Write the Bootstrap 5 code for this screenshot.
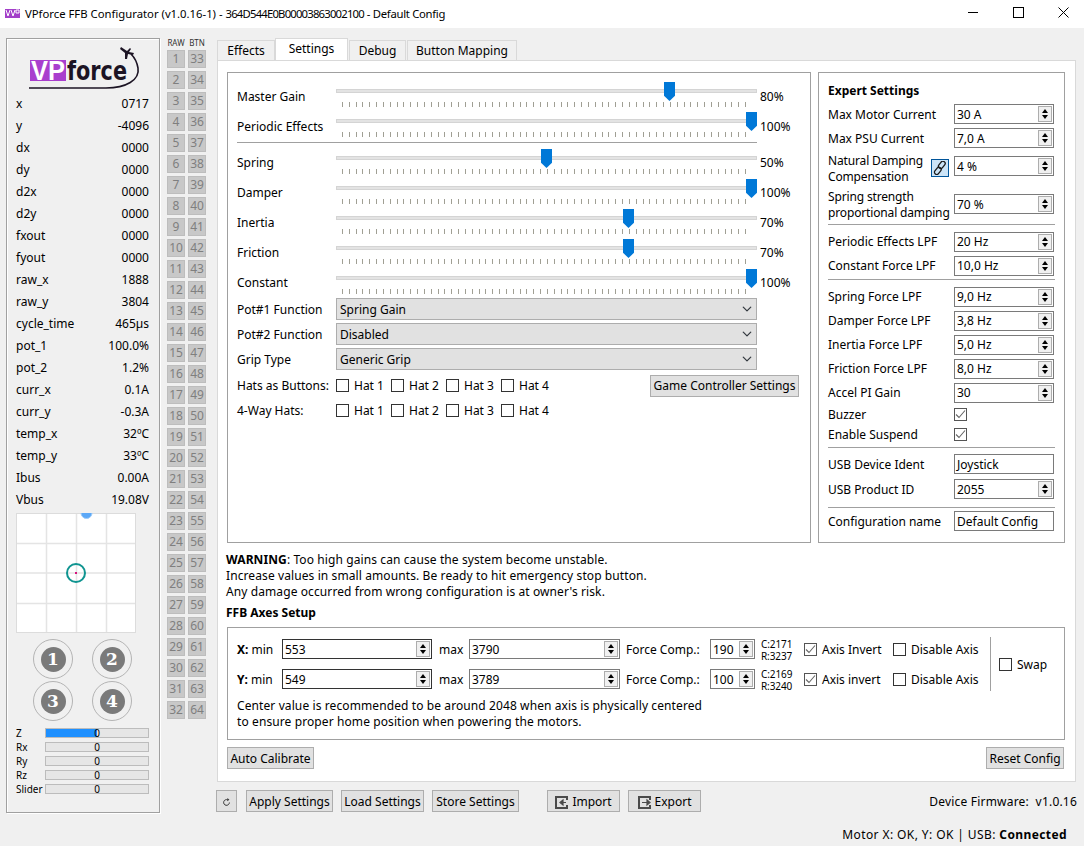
<!DOCTYPE html>
<html lang="en">
<head>
<meta charset="utf-8">
<title>VPforce FFB Configurator</title>
<link href="https://cdn.jsdelivr.net/npm/bootstrap@5.3.0/dist/css/bootstrap.min.css" rel="stylesheet">
<style>
html,body{width:1084px;height:846px;overflow:hidden}
body{background:#f0f0f0;color:#000;font:12px/16px "Noto Sans","Liberation Sans",sans-serif}
.titlebar{height:28px;background:#fff;padding-left:5px}
.titlebar .ttl{margin-left:5px;font-size:11.3px}
.hexid{letter-spacing:-.8px}
.ttlend{letter-spacing:-.3px}
.winrow{margin-right:-2px;align-self:flex-start}
.winctl{width:45px;height:25px}
.appbody{height:796px;padding-left:6px}
.sidepanel{width:154px;height:775px;margin-top:10px;background:#f0f0f0;border:1px solid #a0a0a0;box-shadow:inset 1px 1px #fff,1px 1px #fff;padding:0 10px 0 9px}
.logoarea{height:53px;padding-left:12px;padding-top:5px}
.telrow{height:22px;line-height:24px}
.joy{display:block;width:120px;height:120px;margin-top:3px}
.roundgrid{display:grid;grid-template-columns:40px 40px;gap:2px 19px;margin:6px 0 0 17px}
.roundbtn{width:40px;height:40px;border:1px solid #b4b4b4;border-radius:50%}
.roundbtn span{display:block;width:25px;height:25px;border-radius:50%;background:#7a7a7a;color:#fff;font:700 17px/25px "DejaVu Serif",serif;text-align:center}
.barlist{margin-top:5px}
.barrow{height:14px;font-size:10px;line-height:14px}
.barname{width:29px}
.axisbar{width:104px;height:10px;border:1px solid #bcbcbc;background:#e6e6e6;position:relative;text-align:center;font-size:10px;line-height:8px}
.axisbar i{position:absolute;left:0;top:0;height:100%;background:#1e90ff}
.axisbar b{position:relative;font-weight:400}
.btncol{width:39px;margin:0 0 0 7px;padding-top:10px}
.btncol .hdr{height:12px;font-size:8px;line-height:9px;color:#333;gap:3px;margin-top:0}
.btncol .hdr span{width:18px;text-align:center}
.btngrid{display:grid;grid-template-columns:18px 18px;grid-auto-rows:18px;gap:3px;margin-top:0}
.rawcell{background:#c8c8c8;border:1px solid #bdbdbd;color:#7f7f7f;font-size:12px;line-height:16px;text-align:center}
.maincol{width:859px;margin-left:11px;padding-top:10px}
.tabset{height:22px;gap:0;border:0;flex-wrap:nowrap}
.tabset .nav-link{height:20px;margin:2px 0 0 0;padding:0;text-align:center;line-height:20px;color:#000;font-size:12px;background:#f0f0f0;border:1px solid #d9d9d9;border-bottom:0;border-radius:0;margin-right:1px}
.tabset .nav-link.active{height:22px;margin:0 1px 0 0;background:#fff;border-color:#d9d9d9;color:#000;line-height:20px}
.tab-a{width:58px}.tab-b{width:73px}.tab-c{width:57px}.tab-d{width:110px}
.tabset .tab-a{margin-right:0!important}
.pane{height:722px;background:#fff;border:1px solid #d9d9d9;padding:11px 10px 0 9px}
.topboxes{gap:7px}
.framebox{height:471px;border:1px solid #a0a0a0}
.fxbox{width:584px;padding:9px 11px 0 9px}
.xpbox{width:247px;padding:10px 9px 0 9px}
.fxrow{height:30px}
.fxrow.up>span{margin-top:-2px}
.fxname{width:99px;flex:none}
.track{width:421px;height:30px;flex:none;position:relative;margin-top:0!important}
.track::before{content:"";position:absolute;left:0;right:0;top:7px;height:4px;background:#e3e3e3;border:1px solid #d4d4d4}
.track::after{content:"";position:absolute;left:6px;right:5px;top:20px;height:5px;background:repeating-linear-gradient(90deg,#a09f94 0 1px,transparent 1px 6.833px)}
.thumb{position:absolute;top:0;width:11px;height:19px;margin-left:-6px;background:#0078d7;clip-path:polygon(0 0,100% 0,100% 73%,50% 100%,0 73%);z-index:1}
.fxval{margin-left:3px;white-space:nowrap}
.fxsep{height:1px;background:#a0a0a0;margin-bottom:6px;width:520px}
.fxsel{width:421px;height:22px;flex:none;padding:2px 20px 0 3px;font-size:12px;line-height:18px;color:#000;background-color:#e1e1e1;border:1px solid #adadad;border-radius:0;background-position:right 3px center;background-size:12px 10px}
.selrow{height:22px;margin-bottom:3px}
.selrow .fxname{padding-top:2px}
.selrow.first{margin-top:-1px}
.hatrow{height:25px}
.hatopt{width:55px;gap:5px;margin:0}
.chk{width:13px;height:13px;margin:0;flex:none;border:1px solid #333;border-radius:0!important;background-color:#fff;box-shadow:none!important}
.chk:checked,.chk:checked[type=checkbox]{background-color:#fff;border-color:#555;background-image:url("data:image/svg+xml,%3Csvg xmlns='http://www.w3.org/2000/svg' viewBox='0 0 13 13'%3E%3Cpath d='M2 6.5l3 3 6-7' fill='none' stroke='%23666' stroke-width='1.1'/%3E%3C/svg%3E");background-size:13px 13px}
.appbtn{--bs-btn-padding-x:2px;--bs-btn-padding-y:0;--bs-btn-font-size:12px;--bs-btn-border-radius:0;--bs-btn-bg:#e1e1e1;--bs-btn-border-color:#adadad;--bs-btn-color:#000;--bs-btn-line-height:18px;height:22px;padding-top:2px;white-space:nowrap;display:inline-flex;align-items:center;justify-content:center}
.appbtn.gcs{width:149px;padding-top:0}
.xptitle{height:16px;font-weight:700;margin-bottom:3px}
.xprow{height:24px}
.xprow.tall{height:32px;line-height:16px}
.xprow.lift .spin{line-height:18px}
.xplabel{flex:none;width:126px;white-space:nowrap}
.xplabel.dn1{padding-top:2px}
.xplabel.dn3{padding-top:6px}
.xplabel.tight{letter-spacing:-.15px}
.xpcheck .xplabel{padding-top:2px}
.xpnarrow{width:103px}
.linkbtn{width:18px;height:18px;margin:4px 5px 0 0;background:#cce4f7;border:1px solid #005499;flex:none}
.spin{width:100px;height:20px;border:1px solid #7a7a7a;background:#fff;padding-left:2px;line-height:20px;flex:none;position:relative}
.arrows{position:absolute;right:1px;top:1px;bottom:1px;width:14px;background:#f0f0f0;border:1px solid #adadad}
.arrows::before,.arrows::after{content:"";position:absolute;left:3px;border:3px solid transparent}
.arrows::before{top:-1px;border-bottom:4px solid #000}
.arrows::after{bottom:-1px;border-top:4px solid #000}
.m-s6{margin-top:6px}.m-s5{margin-top:5px}.m-s1{margin-top:1px}.m-n1{margin-top:-1px}.m-s3{margin-top:3px}
.xphr{height:1px;background:#a0a0a0}
.xpcheck{height:20px}
.warnblock{margin:9px 0 0 -1px;line-height:16px;letter-spacing:.1px}
.axhead{margin:5px 0 0 -1px;font-weight:700;height:16px}
.axbox{height:113px;margin-top:6px;border:1px solid #a0a0a0;padding:11px 0 0 9px;width:838px}
.axleft{width:744px;flex:none}
.axrow{height:20px;margin-bottom:10px;white-space:nowrap}
.axrow:last-child{margin-bottom:0}
.axmin{width:45px;flex:none;padding-top:2px}
.spin.wa{width:150px}.spin.wb{width:151px}.spin.wc{width:45px}
.spin.focus{border-color:#333}
.axmax{margin-left:7px;width:30px;flex:none;padding-top:2px}
.axfc{margin-left:6px;width:84px;flex:none;padding-top:2px}
.axcr{margin-left:6px;width:43px;flex:none;font-size:10px;line-height:12px;padding-top:1px;letter-spacing:-.1px}
.axopt{width:89px;flex:none;gap:5px;margin:0}
.axopt2{flex:none;gap:5px;margin:0}
.axopt span,.axopt2 span,.swapopt span{padding-top:2px}
.axvsep{width:1px;background:#a0a0a0;margin:-2px 0 -2px 9px;height:54px;flex:none}
.swapopt{margin-left:8px;gap:5px}
.axnote{margin-top:8px;line-height:16px;letter-spacing:.1px;padding-top:1px}
.paneact{margin-top:7px;width:837px}
.btn-auto{width:87px}.btn-reset{width:78px}
.footrow{margin:8px 0 0 -1px;height:22px}
.f-ref{width:21px;margin-right:9px}.f-apply{width:87px;margin-right:8px}.f-load{width:83px;margin-right:8px}.f-store{width:87px;margin-right:28px}.f-imp{width:73px;margin-right:8px}.f-exp{width:73px}
.appbtn svg{margin-right:4px}
.fw{margin:0 -1px 0 auto;padding-top:4px;letter-spacing:.2px}
.statusline{height:22px;padding-right:17px;line-height:20px;letter-spacing:.4px}
</style>
</head>
<body>
<div class="titlebar d-flex align-items-center">
  <svg width="15" height="10" viewBox="0 0 15 10"><rect width="15" height="9" y="0" fill="#a33fc9"/><path d="M1 1l2 6 2-6M6 1l2 6 2-6M11 1h3v3h-3z" fill="none" stroke="#fff"/></svg>
  <span class="ttl">VPforce FFB Configurator (v1.0.16-1) - <span class="hexid">364D544E0B00003863002100</span> <span class="ttlend">- Default Config</span></span>
  <div class="ms-auto d-flex winrow">
    <div class="winctl d-flex align-items-center justify-content-center"><svg width="11" height="11"><path d="M0 5.500h10" stroke="#000"/></svg></div>
    <div class="winctl d-flex align-items-center justify-content-center"><svg width="11" height="11"><rect x=".5" y=".5" width="10" height="10" fill="none" stroke="#000"/></svg></div>
    <div class="winctl d-flex align-items-center justify-content-center"><svg width="11" height="11"><path d="M.5.5l10 10M10.500.5l-10 10" stroke="#000"/></svg></div>
  </div>
</div>

<div class="appbody d-flex">
  <aside class="sidepanel">
    <div class="logoarea">
      <svg width="125" height="48" viewBox="0 0 125 48">
        <rect x="2" y="16" width="36" height="21" fill="#a93fce"/>
        <text x="3" y="36" font-family="Liberation Sans" font-weight="700" font-size="27" fill="#fff" textLength="34" lengthAdjust="spacingAndGlyphs">VP</text>
        <text x="39" y="36" font-family="DejaVu Sans" font-weight="700" font-size="26" fill="#1c1424" textLength="60" lengthAdjust="spacingAndGlyphs">force</text>
        <path d="M1 44H78C98 44 112 36 110 24C109 18 106 13 103 10" fill="none" stroke="#1c1424" stroke-width="1.6"/>
        <path d="M93 3l6 4 3-3 1 1-2 3 5 1-1 2-5-1-1 5-2 0 0-6-5-4z" fill="#1c1424"/>
      </svg>
    </div>
    <div class="telrow d-flex justify-content-between"><span>x</span><span>0717</span></div>
    <div class="telrow d-flex justify-content-between"><span>y</span><span>-4096</span></div>
    <div class="telrow d-flex justify-content-between"><span>dx</span><span>0000</span></div>
    <div class="telrow d-flex justify-content-between"><span>dy</span><span>0000</span></div>
    <div class="telrow d-flex justify-content-between"><span>d2x</span><span>0000</span></div>
    <div class="telrow d-flex justify-content-between"><span>d2y</span><span>0000</span></div>
    <div class="telrow d-flex justify-content-between"><span>fxout</span><span>0000</span></div>
    <div class="telrow d-flex justify-content-between"><span>fyout</span><span>0000</span></div>
    <div class="telrow d-flex justify-content-between"><span>raw_x</span><span>1888</span></div>
    <div class="telrow d-flex justify-content-between"><span>raw_y</span><span>3804</span></div>
    <div class="telrow d-flex justify-content-between"><span>cycle_time</span><span>465µs</span></div>
    <div class="telrow d-flex justify-content-between"><span>pot_1</span><span>100.0%</span></div>
    <div class="telrow d-flex justify-content-between"><span>pot_2</span><span>1.2%</span></div>
    <div class="telrow d-flex justify-content-between"><span>curr_x</span><span>0.1A</span></div>
    <div class="telrow d-flex justify-content-between"><span>curr_y</span><span>-0.3A</span></div>
    <div class="telrow d-flex justify-content-between"><span>temp_x</span><span>32ºC</span></div>
    <div class="telrow d-flex justify-content-between"><span>temp_y</span><span>33ºC</span></div>
    <div class="telrow d-flex justify-content-between"><span>Ibus</span><span>0.00A</span></div>
    <div class="telrow d-flex justify-content-between"><span>Vbus</span><span>19.08V</span></div>
    <svg class="joy" viewBox="0 0 120 120">
      <rect width="120" height="120" fill="#fff"/>
      <path d="M30.500 0V120M60.500 0V120M90.500 0V120M0 30.500H120M0 60H120M0 90.500H120" stroke="#e4e4e4" stroke-width="1.500"/>
      <rect x=".5" y=".5" width="119" height="119" fill="none" stroke="#dcdcdc"/>
      <circle cx="70.500" cy="0" r="5.500" fill="#5ba8f7" stroke="#9ccbfa"/>
      <circle cx="60" cy="60" r="9" fill="none" stroke="#0f9490" stroke-width="2"/>
      <rect x="59" y="59" width="2" height="2" fill="#d6127d"/>
    </svg>
    <div class="roundgrid">
      <div class="roundbtn d-flex align-items-center justify-content-center"><span>1</span></div>
      <div class="roundbtn d-flex align-items-center justify-content-center"><span>2</span></div>
      <div class="roundbtn d-flex align-items-center justify-content-center"><span>3</span></div>
      <div class="roundbtn d-flex align-items-center justify-content-center"><span>4</span></div>
    </div>
    <div class="barlist">
      <div class="barrow d-flex align-items-center"><span class="barname">Z</span><div class="axisbar"><i class="w-50"></i><b>0</b></div></div>
      <div class="barrow d-flex align-items-center"><span class="barname">Rx</span><div class="axisbar"><b>0</b></div></div>
      <div class="barrow d-flex align-items-center"><span class="barname">Ry</span><div class="axisbar"><b>0</b></div></div>
      <div class="barrow d-flex align-items-center"><span class="barname">Rz</span><div class="axisbar"><b>0</b></div></div>
      <div class="barrow d-flex align-items-center"><span class="barname">Slider</span><div class="axisbar"><b>0</b></div></div>
    </div>
  </aside>

  <div class="btncol">
    <div class="hdr d-flex"><span>RAW</span><span>BTN</span></div>
    <div class="btngrid">
      <div class="rawcell">1</div><div class="rawcell">33</div>
      <div class="rawcell">2</div><div class="rawcell">34</div>
      <div class="rawcell">3</div><div class="rawcell">35</div>
      <div class="rawcell">4</div><div class="rawcell">36</div>
      <div class="rawcell">5</div><div class="rawcell">37</div>
      <div class="rawcell">6</div><div class="rawcell">38</div>
      <div class="rawcell">7</div><div class="rawcell">39</div>
      <div class="rawcell">8</div><div class="rawcell">40</div>
      <div class="rawcell">9</div><div class="rawcell">41</div>
      <div class="rawcell">10</div><div class="rawcell">42</div>
      <div class="rawcell">11</div><div class="rawcell">43</div>
      <div class="rawcell">12</div><div class="rawcell">44</div>
      <div class="rawcell">13</div><div class="rawcell">45</div>
      <div class="rawcell">14</div><div class="rawcell">46</div>
      <div class="rawcell">15</div><div class="rawcell">47</div>
      <div class="rawcell">16</div><div class="rawcell">48</div>
      <div class="rawcell">17</div><div class="rawcell">49</div>
      <div class="rawcell">18</div><div class="rawcell">50</div>
      <div class="rawcell">19</div><div class="rawcell">51</div>
      <div class="rawcell">20</div><div class="rawcell">52</div>
      <div class="rawcell">21</div><div class="rawcell">53</div>
      <div class="rawcell">22</div><div class="rawcell">54</div>
      <div class="rawcell">23</div><div class="rawcell">55</div>
      <div class="rawcell">24</div><div class="rawcell">56</div>
      <div class="rawcell">25</div><div class="rawcell">57</div>
      <div class="rawcell">26</div><div class="rawcell">58</div>
      <div class="rawcell">27</div><div class="rawcell">59</div>
      <div class="rawcell">28</div><div class="rawcell">60</div>
      <div class="rawcell">29</div><div class="rawcell">61</div>
      <div class="rawcell">30</div><div class="rawcell">62</div>
      <div class="rawcell">31</div><div class="rawcell">63</div>
      <div class="rawcell">32</div><div class="rawcell">64</div>
    </div>
  </div>

  <main class="maincol">
    <ul class="nav nav-tabs tabset">
      <li class="nav-item"><a class="nav-link tab-a" href="#">Effects</a></li>
      <li class="nav-item"><a class="nav-link active tab-b" href="#">Settings</a></li>
      <li class="nav-item"><a class="nav-link tab-c" href="#">Debug</a></li>
      <li class="nav-item"><a class="nav-link tab-d" href="#">Button Mapping</a></li>
    </ul>
    <div class="pane">
      <div class="d-flex topboxes">
        <section class="framebox fxbox">
          <div class="fxrow d-flex align-items-center"><span class="fxname">Master Gain</span><div class="track"><span class="thumb" style="left:334px"></span></div><span class="fxval">80%</span></div>
          <div class="fxrow d-flex align-items-center"><span class="fxname">Periodic Effects</span><div class="track"><span class="thumb" style="left:416px"></span></div><span class="fxval">100%</span></div>
          <div class="fxsep"></div>
          <div class="fxrow up d-flex align-items-center"><span class="fxname">Spring</span><div class="track"><span class="thumb" style="left:211px"></span></div><span class="fxval">50%</span></div>
          <div class="fxrow up d-flex align-items-center"><span class="fxname">Damper</span><div class="track"><span class="thumb" style="left:416px"></span></div><span class="fxval">100%</span></div>
          <div class="fxrow up d-flex align-items-center"><span class="fxname">Inertia</span><div class="track"><span class="thumb" style="left:293px"></span></div><span class="fxval">70%</span></div>
          <div class="fxrow up d-flex align-items-center"><span class="fxname">Friction</span><div class="track"><span class="thumb" style="left:293px"></span></div><span class="fxval">70%</span></div>
          <div class="fxrow up d-flex align-items-center"><span class="fxname">Constant</span><div class="track"><span class="thumb" style="left:416px"></span></div><span class="fxval">100%</span></div>
          <div class="selrow first d-flex align-items-center"><span class="fxname">Pot#1 Function</span><select class="form-select fxsel"><option>Spring Gain</option></select></div>
          <div class="selrow d-flex align-items-center"><span class="fxname">Pot#2 Function</span><select class="form-select fxsel"><option>Disabled</option></select></div>
          <div class="selrow d-flex align-items-center"><span class="fxname">Grip Type</span><select class="form-select fxsel"><option>Generic Grip</option></select></div>
          <div class="hatrow d-flex align-items-center"><span class="fxname">Hats as Buttons:</span>
            <label class="hatopt d-flex align-items-center"><input class="form-check-input chk" type="checkbox">Hat 1</label>
            <label class="hatopt d-flex align-items-center"><input class="form-check-input chk" type="checkbox">Hat 2</label>
            <label class="hatopt d-flex align-items-center"><input class="form-check-input chk" type="checkbox">Hat 3</label>
            <label class="hatopt d-flex align-items-center"><input class="form-check-input chk" type="checkbox">Hat 4</label>
            <button class="btn appbtn gcs ms-auto">Game Controller Settings</button>
          </div>
          <div class="hatrow d-flex align-items-center"><span class="fxname">4-Way Hats:</span>
            <label class="hatopt d-flex align-items-center"><input class="form-check-input chk" type="checkbox">Hat 1</label>
            <label class="hatopt d-flex align-items-center"><input class="form-check-input chk" type="checkbox">Hat 2</label>
            <label class="hatopt d-flex align-items-center"><input class="form-check-input chk" type="checkbox">Hat 3</label>
            <label class="hatopt d-flex align-items-center"><input class="form-check-input chk" type="checkbox">Hat 4</label>
          </div>
        </section>
        <section class="framebox xpbox">
          <div class="xptitle">Expert Settings</div>
          <div class="xprow d-flex align-items-center"><span class="xplabel dn1">Max Motor Current</span><div class="spin">30 A<span class="arrows"></span></div></div>
          <div class="xprow d-flex align-items-center"><span class="xplabel dn1">Max PSU Current</span><div class="spin">7,0 A<span class="arrows"></span></div></div>
          <div class="xprow tall d-flex align-items-center"><span class="xplabel xpnarrow dn3 tight">Natural Damping<br>Compensation</span>
            <span class="linkbtn d-flex align-items-center justify-content-center"><svg width="14" height="14" viewBox="0 0 14 14"><g fill="none" stroke="#1a1a1a" stroke-width="1.300"><rect x="6.500" y="0" width="4.500" height="8" rx="2.200" transform="rotate(38 9 4)"/><rect x="2.500" y="6" width="4.500" height="8" rx="2.200" transform="rotate(38 5 10)"/></g></svg></span>
            <div class="spin">4 %<span class="arrows"></span></div></div>
          <div class="xprow tall m-s6 d-flex align-items-center"><span class="xplabel dn1 tight">Spring strength<br>proportional damping</span><div class="spin">70 %<span class="arrows"></span></div></div>
          <div class="xphr mt-1"></div>
          <div class="xprow lift m-s5 d-flex align-items-center"><span class="xplabel">Periodic Effects LPF</span><div class="spin">20 Hz<span class="arrows"></span></div></div>
          <div class="xprow lift d-flex align-items-center"><span class="xplabel">Constant Force LPF</span><div class="spin">10,0 Hz<span class="arrows"></span></div></div>
          <div class="xphr m-s1"></div>
          <div class="xprow lift m-s5 d-flex align-items-center"><span class="xplabel">Spring Force LPF</span><div class="spin">9,0 Hz<span class="arrows"></span></div></div>
          <div class="xprow lift d-flex align-items-center"><span class="xplabel">Damper Force LPF</span><div class="spin">3,8 Hz<span class="arrows"></span></div></div>
          <div class="xprow lift d-flex align-items-center"><span class="xplabel">Inertia Force LPF</span><div class="spin">5,0 Hz<span class="arrows"></span></div></div>
          <div class="xprow lift d-flex align-items-center"><span class="xplabel">Friction Force LPF</span><div class="spin">8,0 Hz<span class="arrows"></span></div></div>
          <div class="xprow lift d-flex align-items-center"><span class="xplabel">Accel PI Gain</span><div class="spin">30<span class="arrows"></span></div></div>
          <div class="xpcheck m-n1 d-flex align-items-center"><span class="xplabel">Buzzer</span><input class="form-check-input chk" type="checkbox" checked></div>
          <div class="xpcheck d-flex align-items-center"><span class="xplabel">Enable Suspend</span><input class="form-check-input chk" type="checkbox" checked></div>
          <div class="xphr m-s3"></div>
          <div class="xprow mt-1 d-flex align-items-center"><span class="xplabel dn1">USB Device Ident</span><div class="spin">Joystick</div></div>
          <div class="xprow m-s1 d-flex align-items-center"><span class="xplabel dn1">USB Product ID</span><div class="spin">2055<span class="arrows"></span></div></div>
          <div class="xphr m-s6"></div>
          <div class="xprow m-s1 d-flex align-items-center"><span class="xplabel dn1">Configuration name</span><div class="spin">Default Config</div></div>
        </section>
      </div>
      <div class="warnblock"><strong>WARNING</strong>: Too high gains can cause the system become unstable.<br>Increase values in small amounts. Be ready to hit emergency stop button.<br>Any damage occurred from wrong configuration is at owner's risk.</div>
      <div class="axhead">FFB Axes Setup</div>
      <section class="axbox">
        <div class="d-flex">
          <div class="axleft">
            <div class="axrow d-flex align-items-center"><span class="axmin"><strong>X:</strong> min</span><div class="spin wa focus">553<span class="arrows"></span></div><span class="axmax">max</span><div class="spin wb">3790<span class="arrows"></span></div><span class="axfc">Force Comp.:</span><div class="spin wc">190<span class="arrows"></span></div><span class="axcr">C:2171<br>R:3237</span>
              <label class="axopt d-flex align-items-center"><input class="form-check-input chk" type="checkbox" checked><span>Axis Invert</span></label><label class="axopt2 d-flex align-items-center"><input class="form-check-input chk" type="checkbox"><span>Disable Axis</span></label></div>
            <div class="axrow d-flex align-items-center"><span class="axmin"><strong>Y:</strong> min</span><div class="spin wa focus">549<span class="arrows"></span></div><span class="axmax">max</span><div class="spin wb">3789<span class="arrows"></span></div><span class="axfc">Force Comp.:</span><div class="spin wc">100<span class="arrows"></span></div><span class="axcr">C:2169<br>R:3240</span>
              <label class="axopt d-flex align-items-center"><input class="form-check-input chk" type="checkbox" checked><span>Axis invert</span></label><label class="axopt2 d-flex align-items-center"><input class="form-check-input chk" type="checkbox"><span>Disable Axis</span></label></div>
          </div>
          <div class="axvsep"></div>
          <label class="swapopt d-flex align-items-center"><input class="form-check-input chk" type="checkbox"><span>Swap</span></label>
        </div>
        <div class="axnote">Center value is recommended to be around 2048 when axis is physically centered<br>to ensure proper home position when powering the motors.</div>
      </section>
      <div class="paneact d-flex justify-content-between">
        <button class="btn appbtn btn-auto">Auto Calibrate</button>
        <button class="btn appbtn btn-reset">Reset Config</button>
      </div>
    </div>
    <div class="footrow d-flex">
      <button class="btn appbtn f-ref"><svg class="m-0" width="9" height="9" viewBox="0 0 11 11"><path d="M9 5.500A3.500 3.500 0 1 1 7 2.300" fill="none" stroke="#333" stroke-width="1.200"/><path d="M6.500 0v4l2.500-2z" fill="#333"/></svg></button>
      <button class="btn appbtn f-apply">Apply Settings</button>
      <button class="btn appbtn f-load">Load Settings</button>
      <button class="btn appbtn f-store">Store Settings</button>
      <button class="btn appbtn f-imp"><svg width="13" height="13" viewBox="0 0 13 13"><path d="M12 4V1H1v11h11V9" fill="none" stroke="#4a4a4a" stroke-width="2"/><path d="M11 6.500H6M8 4L5 6.500 8 9z" fill="#4a4a4a" stroke="#4a4a4a" stroke-width="1.200"/></svg>Import</button>
      <button class="btn appbtn f-exp"><svg width="13" height="13" viewBox="0 0 13 13"><path d="M12 4V1H1v11h11V9" fill="none" stroke="#4a4a4a" stroke-width="2"/><path d="M4 6.500h6M9 4l3 2.500L9 9z" fill="#4a4a4a" stroke="#4a4a4a" stroke-width="1.200"/></svg>Export</button>
      <span class="fw">Device Firmware:&nbsp; v1.0.16</span>
    </div>
  </main>
</div>
<div class="statusline d-flex justify-content-end align-items-center">Motor X: OK, Y: OK | USB:&nbsp;<strong>Connected</strong></div>
</body>
</html>
